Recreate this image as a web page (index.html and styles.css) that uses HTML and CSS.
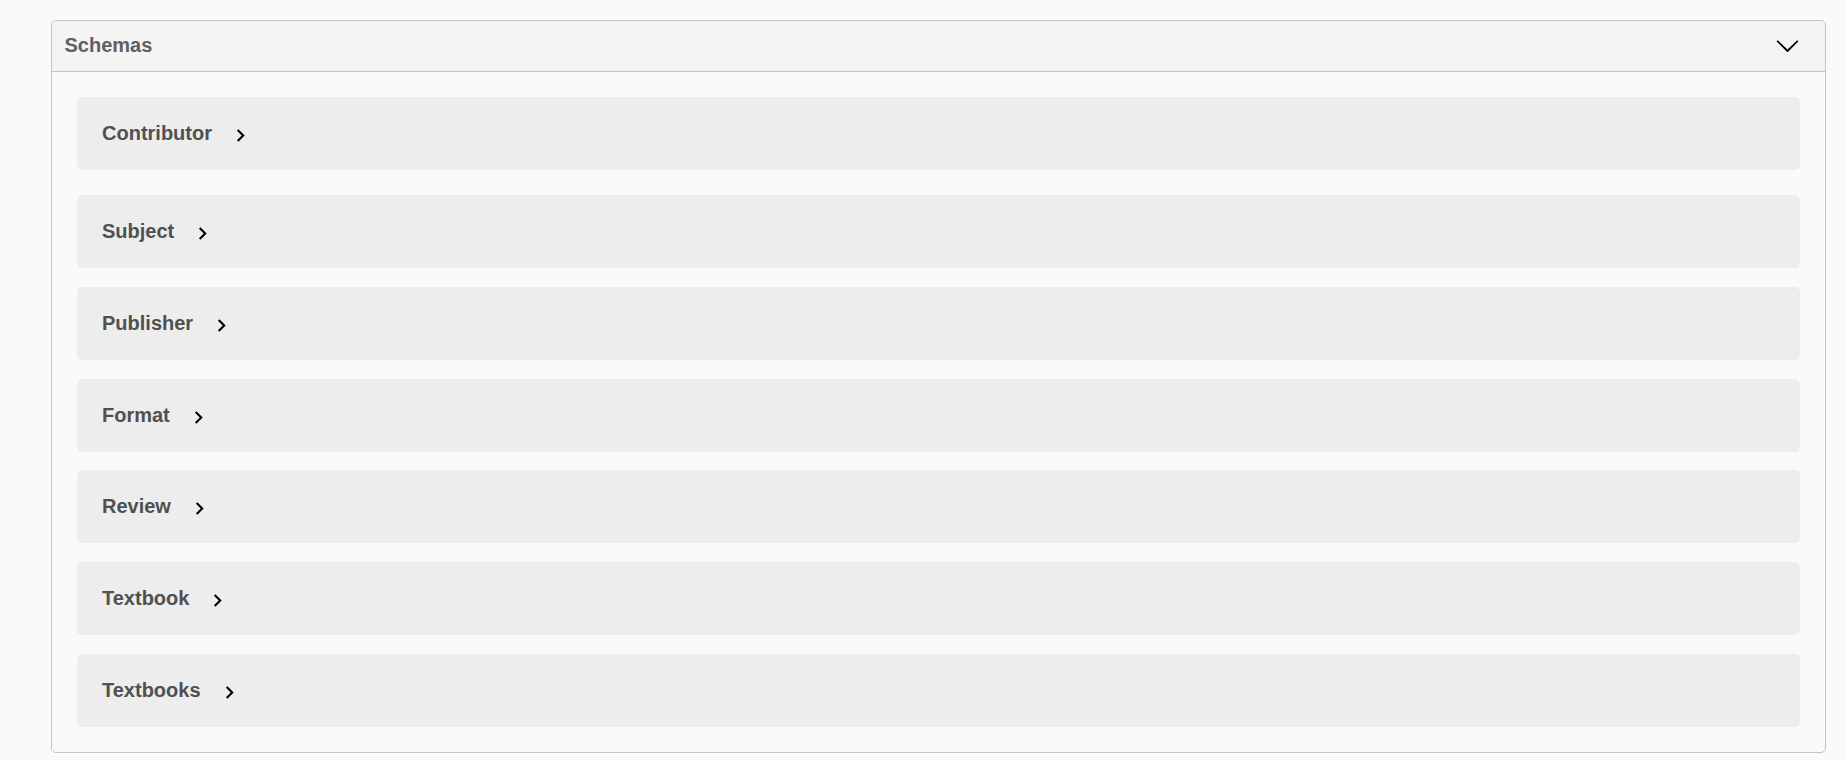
FILE: index.html
```html
<!DOCTYPE html>
<html>
<head>
<meta charset="utf-8">
<link rel="stylesheet" href="styles.css">
</head>
<body>
<section class="models">
  <h4 class="models-head">
    <span>Schemas</span>
    <svg class="head-arrow" width="25" height="25" viewBox="0 0 20 20"><path d="M17.418 6.109c.272-.268.709-.268.979 0s.271.701 0 .969l-7.908 7.83c-.27.268-.707.268-.979 0l-7.908-7.830c-.27-.268-.27-.701 0-.969.271-.268.709-.268.979 0L10 13.25l7.418-7.141z"/></svg>
  </h4>
  <div class="models-body">
    <div class="model"><span class="model-title">Contributor</span><svg class="toggle" width="25" height="25" viewBox="0 0 24 24"><path d="M10 6L8.59 7.41 13.17 12l-4.58 4.59L10 18l6-6z"/></svg></div>
    <div class="model"><span class="model-title">Subject</span><svg class="toggle" width="25" height="25" viewBox="0 0 24 24"><path d="M10 6L8.59 7.41 13.17 12l-4.58 4.59L10 18l6-6z"/></svg></div>
    <div class="model"><span class="model-title">Publisher</span><svg class="toggle" width="25" height="25" viewBox="0 0 24 24"><path d="M10 6L8.59 7.41 13.17 12l-4.58 4.59L10 18l6-6z"/></svg></div>
    <div class="model"><span class="model-title">Format</span><svg class="toggle" width="25" height="25" viewBox="0 0 24 24"><path d="M10 6L8.59 7.41 13.17 12l-4.58 4.59L10 18l6-6z"/></svg></div>
    <div class="model"><span class="model-title">Review</span><svg class="toggle" width="25" height="25" viewBox="0 0 24 24"><path d="M10 6L8.59 7.41 13.17 12l-4.58 4.59L10 18l6-6z"/></svg></div>
    <div class="model"><span class="model-title">Textbook</span><svg class="toggle" width="25" height="25" viewBox="0 0 24 24"><path d="M10 6L8.59 7.41 13.17 12l-4.58 4.59L10 18l6-6z"/></svg></div>
    <div class="model"><span class="model-title">Textbooks</span><svg class="toggle" width="25" height="25" viewBox="0 0 24 24"><path d="M10 6L8.59 7.41 13.17 12l-4.58 4.59L10 18l6-6z"/></svg></div>
  </div>
</section>
</body>
</html>
```

FILE: styles.css
```css
html, body {
  margin: 0;
  padding: 0;
  background: #fafafa;
}
body {
  font-family: "Liberation Sans", Arial, sans-serif;
}
.models {
  margin: 20px 21px 0 51px;
  border: 1px solid #c1c3c7;
  border-radius: 5px;
}
.models-head {
  margin: 0;
  display: flex;
  align-items: center;
  justify-content: space-between;
  padding: 12px 25px 13px 12.5px;
  height: 25px;
  background: #f4f4f4;
  border-bottom: 1px solid #c1c3c7;
  border-radius: 5px 5px 0 0;
  font-size: 20px;
  line-height: 25px;
  font-weight: bold;
  color: #606060;
}
.head-arrow {
  display: block;
  fill: #000;
}
.models-body {
  padding: 25px 25px 25px;
  display: flex;
  flex-direction: column;
}
.model {
  height: 73px;
  box-sizing: border-box;
  display: flex;
  align-items: center;
  padding-left: 25px;
  background: #ededed;
  border-radius: 5px;
  margin-bottom: 18.75px;
}
.model:first-child {
  margin-bottom: 25px;
}
.model:last-child {
  margin-bottom: 0;
}
.model-title {
  font-size: 20px;
  line-height: 25px;
  font-weight: bold;
  color: #505050;
}
.toggle {
  display: block;
  margin-left: 16px;
  margin-top: 4px;
  fill: #000;
}
```
